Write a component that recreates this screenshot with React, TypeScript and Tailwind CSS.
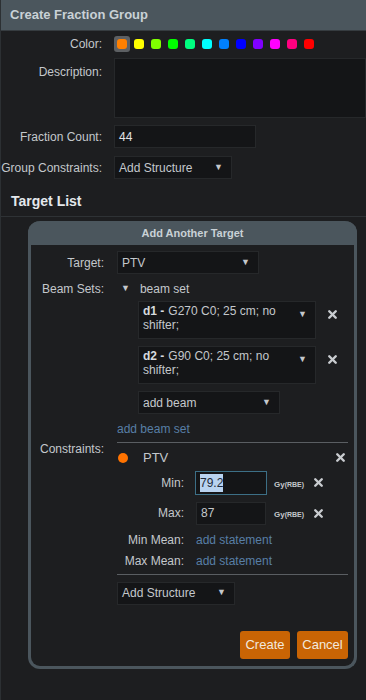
import { X } from 'lucide-react';

const SWATCHES = ['#ff8000', '#ffff00', '#80ff00', '#00ff00', '#00ff80', '#00ffff', '#0080ff', '#0000ff', '#8000ff', '#ff00ff', '#ff0080', '#ff0000'];

function Caret() {
  return <span className="text-[9px] text-[#c4c8cc]">▼</span>;
}

function Remove({ className = '' }: { className?: string }) {
  return <X className={'h-[13px] w-[13px] text-[#c9ccd0] ' + className} strokeWidth={4.5} />;
}

function Select({ value, width }: { value: string; width: string }) {
  return (
    <div className={`flex h-[23px] items-center justify-between border border-[#26282a] bg-[#141517] pl-[4px] pr-[8px] text-[#c4c8cc] ${width}`}>
      <span>{value}</span>
      <Caret />
    </div>
  );
}

// beam summary wraps onto two lines in the original; lines kept explicit
function BeamBox({ id, first, rest }: { id: string; first: string; rest: string }) {
  return (
    <div className="flex items-start gap-[10px]">
      <div className="flex h-[38px] w-[178px] items-start justify-between border border-[#26282a] bg-[#141517] pl-[4px] pr-[8px] pt-[2px] leading-[14px]">
        <div className="w-[150px]">
          <div className="flex gap-[4px]">
            <b className="text-[#d6dade]">{id} -</b>
            <span>{first}</span>
          </div>
          <div>{rest}</div>
        </div>
        <span className="pt-[2px]"><Caret /></span>
      </div>
      <Remove className="mt-[7px]" />
    </div>
  );
}

function Unit() {
  return (
    <span className="font-bold text-[#c4c8cc]">
      <span className="text-[8px]">Gy</span>
      <span className="text-[7px]">(RBE)</span>
    </span>
  );
}

export default function App() {
  return (
    <div className="h-[700px] w-[366px] overflow-hidden border-l border-[#2c3033] bg-[#1d1e20] font-['Liberation_Sans',Arial,sans-serif] text-[12px] text-[#c4c8cc]">
      <div className="flex h-[31px] items-center border-b border-[#363c40] bg-[#4b565d] px-[9px] text-[13px] font-bold text-[#c9d1d6]">
        Create Fraction Group
      </div>

      <div className="mt-[4px] flex items-center">
        <div className="w-[101px] text-right">Color:</div>
        <div className="ml-[12px] flex items-center gap-[1px]">
          {SWATCHES.map((c, i) => (
            <div key={c} className={`flex h-[16px] w-[16px] items-center justify-center rounded-[3px] ${i === 0 ? 'bg-[#5d6063]' : ''}`}>
              <div className="h-[10px] w-[10px] rounded-[3px]" style={{ background: c }} />
            </div>
          ))}
        </div>
      </div>

      <div className="mt-[5px] flex items-start">
        <div className="w-[101px] pt-[5px] text-right">Description:</div>
        <div className="ml-[12px] h-[60px] flex-1 border border-[#26282a] bg-[#141517]" />
      </div>

      <div className="mt-[7px] flex items-center">
        <div className="w-[101px] text-right">Fraction Count:</div>
        <div className="ml-[12px] flex h-[23px] w-[142px] items-center border border-[#26282a] bg-[#141517] px-[4px] text-[#e0e3e6]">44</div>
      </div>

      <div className="mt-[8px] flex items-center">
        <div className="w-[101px] text-right">Group Constraints:</div>
        <div className="ml-[12px]">
          <Select value="Add Structure" width="w-[118px]" />
        </div>
      </div>

      <div className="mt-[8px] flex h-[30px] items-center border-b border-[#2e3235] px-[10px] text-[14px] font-bold text-[#e4e8ec]">
        Target List
      </div>

      <div className="ml-[27px] mt-[4px] w-[329px] rounded-[12px] border-[3px] border-t-0 border-[#4b565d] bg-[#1d1e20]">
        <div className="-mx-[3px] flex h-[24px] items-center justify-center rounded-t-[12px] bg-[#4b565d] text-[11px] font-bold text-[#c9d1d6]">
          Add Another Target
        </div>

        <div className="pb-[7px]">
          <div className="mt-[6px] flex items-center">
            <div className="w-[73px] text-right">Target:</div>
            <div className="ml-[13px]"><Select value="PTV" width="w-[142px]" /></div>
          </div>

          <div className="mt-[6px] flex items-start">
            <div className="w-[73px] text-right">Beam Sets:</div>
            <div className="ml-[13px] flex flex-col">
              <div className="flex items-center gap-[10px]">
                <span className="ml-[4px] text-[9px]">▼</span>
                <span>beam set</span>
              </div>
              <div className="ml-[21px] mt-[3px] flex flex-col gap-[7px]">
                <BeamBox id="d1" first="G270 C0; 25 cm; no" rest="shifter;" />
                <BeamBox id="d2" first="G90 C0; 25 cm; no" rest="shifter;" />
                <Select value="add beam" width="w-[142px]" />
              </div>
              <div className="mt-[6px] text-[#587ea6]">add beam set</div>
            </div>
          </div>

          <div className="mt-[4px] flex items-start">
            <div className="-mt-[2px] w-[73px] text-right">Constraints:</div>
            <div className="ml-[13px] w-[231px] border-t border-[#5a5e62] pt-[5px]">
              <div className="flex items-center">
                <div className="ml-[1px] h-[10px] w-[10px] rounded-full bg-[#ff7300]" />
                <span className="ml-[15px] text-[13px]">PTV</span>
                <Remove className="ml-auto mr-[1px]" />
              </div>

              <div className="mt-[3px] flex items-center">
                <div className="w-[67px] text-right">Min:</div>
                <div className="ml-[11px] flex h-[24px] w-[72px] items-center border border-[#3c6f86] bg-[#141517] px-[4px]">
                  <span className="bg-[#b9d3f0] text-[#1d2a3a]">79.2</span>
                </div>
                <span className="ml-[7px]"><Unit /></span>
                <Remove className="ml-[8px]" />
              </div>

              <div className="mt-[7px] flex items-center">
                <div className="w-[67px] text-right">Max:</div>
                <div className="ml-[12px] flex h-[23px] w-[70px] items-center border border-[#26282a] bg-[#141517] px-[4px]">87</div>
                <span className="ml-[8px]"><Unit /></span>
                <Remove className="ml-[8px]" />
              </div>

              <div className="mt-[6px] flex items-center">
                <div className="w-[67px] text-right">Min Mean:</div>
                <span className="ml-[12px] text-[#587ea6]">add statement</span>
              </div>
              <div className="mt-[3px] flex items-center">
                <div className="w-[67px] text-right">Max Mean:</div>
                <span className="ml-[12px] text-[#587ea6]">add statement</span>
              </div>
            </div>
          </div>

          <div className="ml-[86px] mt-[4px] w-[231px] border-t border-[#5a5e62] pt-[7px]">
            <Select value="Add Structure" width="w-[118px]" />
          </div>

          <div className="mr-[6px] mt-[26px] flex justify-end gap-[7px]">
            <button className="h-[28px] w-[50px] rounded-[3px] bg-[#c96404] text-[13px] text-[#f2e8de]">Create</button>
            <button className="h-[28px] w-[51px] rounded-[3px] bg-[#c96404] text-[13px] text-[#f2e8de]">Cancel</button>
          </div>
        </div>
      </div>
    </div>
  );
}
